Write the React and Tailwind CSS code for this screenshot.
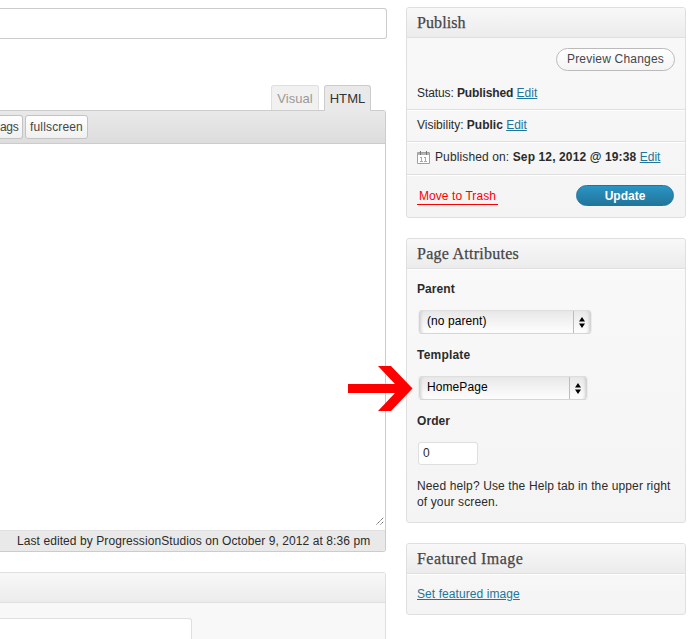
import React from "react";

function Panel({ title, className, titleClass = "tracking-[0.25px]", children }) {
  return (
    <section className={`flex flex-col rounded-[3px] border border-[#dfdfdf] bg-linear-to-b from-[#f9f9f9] to-[#f4f4f4] ${className}`}>
      <h3 className={`h-[30px] shrink-0 rounded-t-[3px] border-b border-[#dfdfdf] bg-linear-to-b from-[#f8f8f8] to-[#ececec] pl-[10px] font-['Liberation_Serif',serif] text-[16px] leading-[29px] whitespace-nowrap text-[#464646] [-webkit-text-stroke:0.25px_#464646] ${titleClass}`}>
        {title}
      </h3>
      {children}
    </section>
  );
}

function Link({ children }) {
  return <a className="tracking-normal text-[#21759b] underline underline-offset-[1px]">{children}</a>;
}

function Select({ value, className }) {
  return (
    <div className={`ml-[1px] flex h-[24px] rounded-[4px] border border-t-[#dedede] border-x-[#ececec] border-b-[#d6d6d6] bg-linear-to-b from-[#e8e8e8] to-[#fefefe] shadow-[inset_4px_0_3px_-2px_#cfcfcf,inset_-4px_0_3px_-2px_#cfcfcf] ${className}`}>
      <span className="flex-1 pl-[8px] leading-[21px] text-black">{value}</span>
      <span className="flex w-[18px] items-center justify-center border-l border-[#bdbdbd] pr-[1px]">
        <svg width="6" height="11" viewBox="0 0 6 11" fill="#000">
          <path d="M3 0 6 4.500H0zM3 11 0 6.500h6z" />
        </svg>
      </span>
    </div>
  );
}

function CalendarIcon() {
  return (
    <svg className="mr-[5px] shrink-0" width="13" height="13" viewBox="0 0 13 13" fill="none" stroke="#a0a0a0">
      <path d="M.5 1.5h12v11H.5z" fill="#fff" />
      <path d="M1 2.500h11M1 3.500h11" stroke="#b4b4b4" />
      <path d="M3.500 0v4M9.500 0v4" stroke="#777" />
      <path d="M3 6.500h2M4.500 6v4M3 10.500h3M7 6.500h2M8.500 6v4M7 10.500h3" stroke="#aaa" />
    </svg>
  );
}

export default function App() {
  return (
    <div className="relative flex h-[639px] w-[700px] overflow-hidden bg-white font-['Liberation_Sans',Arial,sans-serif] text-[12px] leading-[16px] tracking-[0.08px] text-[#2b2b2b]">
      <main className="flex w-[386px] shrink-0 flex-col pt-[8px]">
        <div className="h-[31px] w-[387px] shrink-0 rounded-r-[3px] border border-l-0 border-[#ccc] bg-white" />

        <div className="mt-[46px] flex h-[25px] shrink-0 justify-end gap-[5px] pr-[15px] text-[13px] leading-[25px]">
          <div className="w-[48px] rounded-t-[3px] border border-b-0 border-[#dfdfdf] bg-[#f1f1f1] text-center text-[#999]">Visual</div>
          <div className="relative z-10 h-[26px] w-[47px] rounded-t-[3px] border border-b-0 border-[#ccc] bg-[#e9e9e9] text-center text-[#333]">HTML</div>
        </div>

        <div className="flex h-[442px] shrink-0 flex-col rounded-r-[3px] border border-l-0 border-[#ccc]">
          <div className="flex h-[33px] shrink-0 gap-[2px] border-b border-[#ccc] bg-linear-to-b from-[#e9e9e9] to-[#dddddd] pt-[4px] leading-[22px] text-[#464646]">
            <div className="h-[24px] w-[23px] rounded-r-[3px] border border-l-0 border-[#c3c3c3] bg-linear-to-b from-white to-[#f0f0f0] tracking-[-0.3px] whitespace-nowrap">ags</div>
            <div className="h-[24px] w-[63px] rounded-[3px] border border-[#c3c3c3] bg-linear-to-b from-white to-[#f0f0f0] text-center tracking-[0.15px]">fullscreen</div>
          </div>
          <div className="flex flex-1 items-end justify-end pr-[1px] pb-[5px]">
            <svg width="8" height="8" viewBox="0 0 8 8" stroke="#666" strokeDasharray="1.500 .5">
              <path d="M.5 7.500l7-7M4.500 7.500l3-3" />
            </svg>
          </div>
          <div className="h-[21px] shrink-0 rounded-br-[3px] border-t border-[#dfdfdf] bg-[#e9e9e9] pl-[17px] leading-[20px] whitespace-nowrap">
            Last edited by ProgressionStudios on October 9, 2012 at 8:36 pm
          </div>
        </div>

        <div className="mt-[20px] h-[67px] shrink-0 rounded-tr-[3px] border-t border-r border-[#dfdfdf] bg-[#f8f8f8]">
          <div className="h-[30px] border-b border-[#dfdfdf] bg-linear-to-b from-[#f8f8f8] to-[#ececec]" />
          <div className="mt-[15px] h-[21px] w-[192px] rounded-tr-[3px] border-t border-r border-[#dfdfdf] bg-white" />
        </div>
      </main>

      <aside className="ml-[20px] flex w-[280px] shrink-0 flex-col pt-[7px]">
        <Panel title="Publish" titleClass="tracking-[0.1px]" className="h-[211px]">
          <div className="flex h-[72px] shrink-0 flex-col border-b border-[#dfdfdf] px-[10px] pt-[10px]">
            <div className="h-[23px] w-[119px] self-end rounded-full border border-[#bbb] bg-linear-to-b from-white to-[#f4f4f4] text-center leading-[21px] tracking-[0.2px] whitespace-nowrap text-[#464646]">
              Preview Changes
            </div>
            <p className="mt-[14px] tracking-[-0.1px]">Status: <b>Published</b> <Link>Edit</Link></p>
          </div>
          <p className="h-[32px] shrink-0 border-t border-b border-t-white border-b-[#dfdfdf] pt-[6px] pl-[10px] tracking-normal">
            Visibility: <b>Public</b> <Link>Edit</Link>
          </p>
          <div className="flex h-[33px] shrink-0 items-center border-t border-b border-t-white border-b-[#dfdfdf] pb-[3px] pl-[10px] whitespace-nowrap">
            <CalendarIcon />
            <p className="tracking-[0.12px] whitespace-pre">Published on: <b>Sep 12, 2012 @ 19:38</b> <Link>Edit</Link></p>
          </div>
          <div className="flex flex-1 items-start justify-between border-t border-white pr-[11px] pl-[10px] pt-[9px]">
            <a className="mt-[3px] h-[17px] w-[81px] border-b border-b-[#ff0000] text-center leading-[16px] whitespace-nowrap text-[#ff0000]">Move to Trash</a>
            <div className="h-[21px] w-[98px] rounded-full border border-[#21759b] bg-linear-to-b from-[#2a95c5] to-[#21759b] text-center leading-[20px] font-bold tracking-normal text-white">Update</div>
          </div>
        </Panel>

        <Panel title="Page Attributes" className="mt-[20px] h-[285px]">
          <div className="flex flex-col border-t border-white pl-[10px] pt-[11px]">
            <b>Parent</b>
            <Select value="(no parent)" className="mt-[13px] w-[174px]" />
            <b className="mt-[13px] tracking-[0.2px]">Template</b>
            <Select value="HomePage" className="mt-[13px] w-[170px]" />
            <b className="mt-[13px]">Order</b>
            <div className="mt-[13px] ml-[1px] h-[23px] w-[60px] rounded-[3px] border border-[#dfdfdf] bg-white pl-[4px] leading-[21px]">0</div>
            <p className="mt-[13px] tracking-[0.13px] whitespace-nowrap">Need help? Use the Help tab in the upper right<br />of your screen.</p>
          </div>
        </Panel>

        <Panel title="Featured Image" titleClass="tracking-[0.45px]" className="mt-[20px] h-[72px]">
          <p className="border-t border-white pl-[10px] pt-[11px]"><a className="text-[#21759b] underline underline-offset-[1px]">Set featured image</a></p>
        </Panel>
      </aside>

      <svg className="absolute top-[365px] left-[348px] z-10" width="65" height="47" viewBox="0 0 65 47" fill="#f00">
        <path d="M30 1h13l21.500 22.500L43 46H30l17-18H0v-9h47z" />
      </svg>
    </div>
  );
}
